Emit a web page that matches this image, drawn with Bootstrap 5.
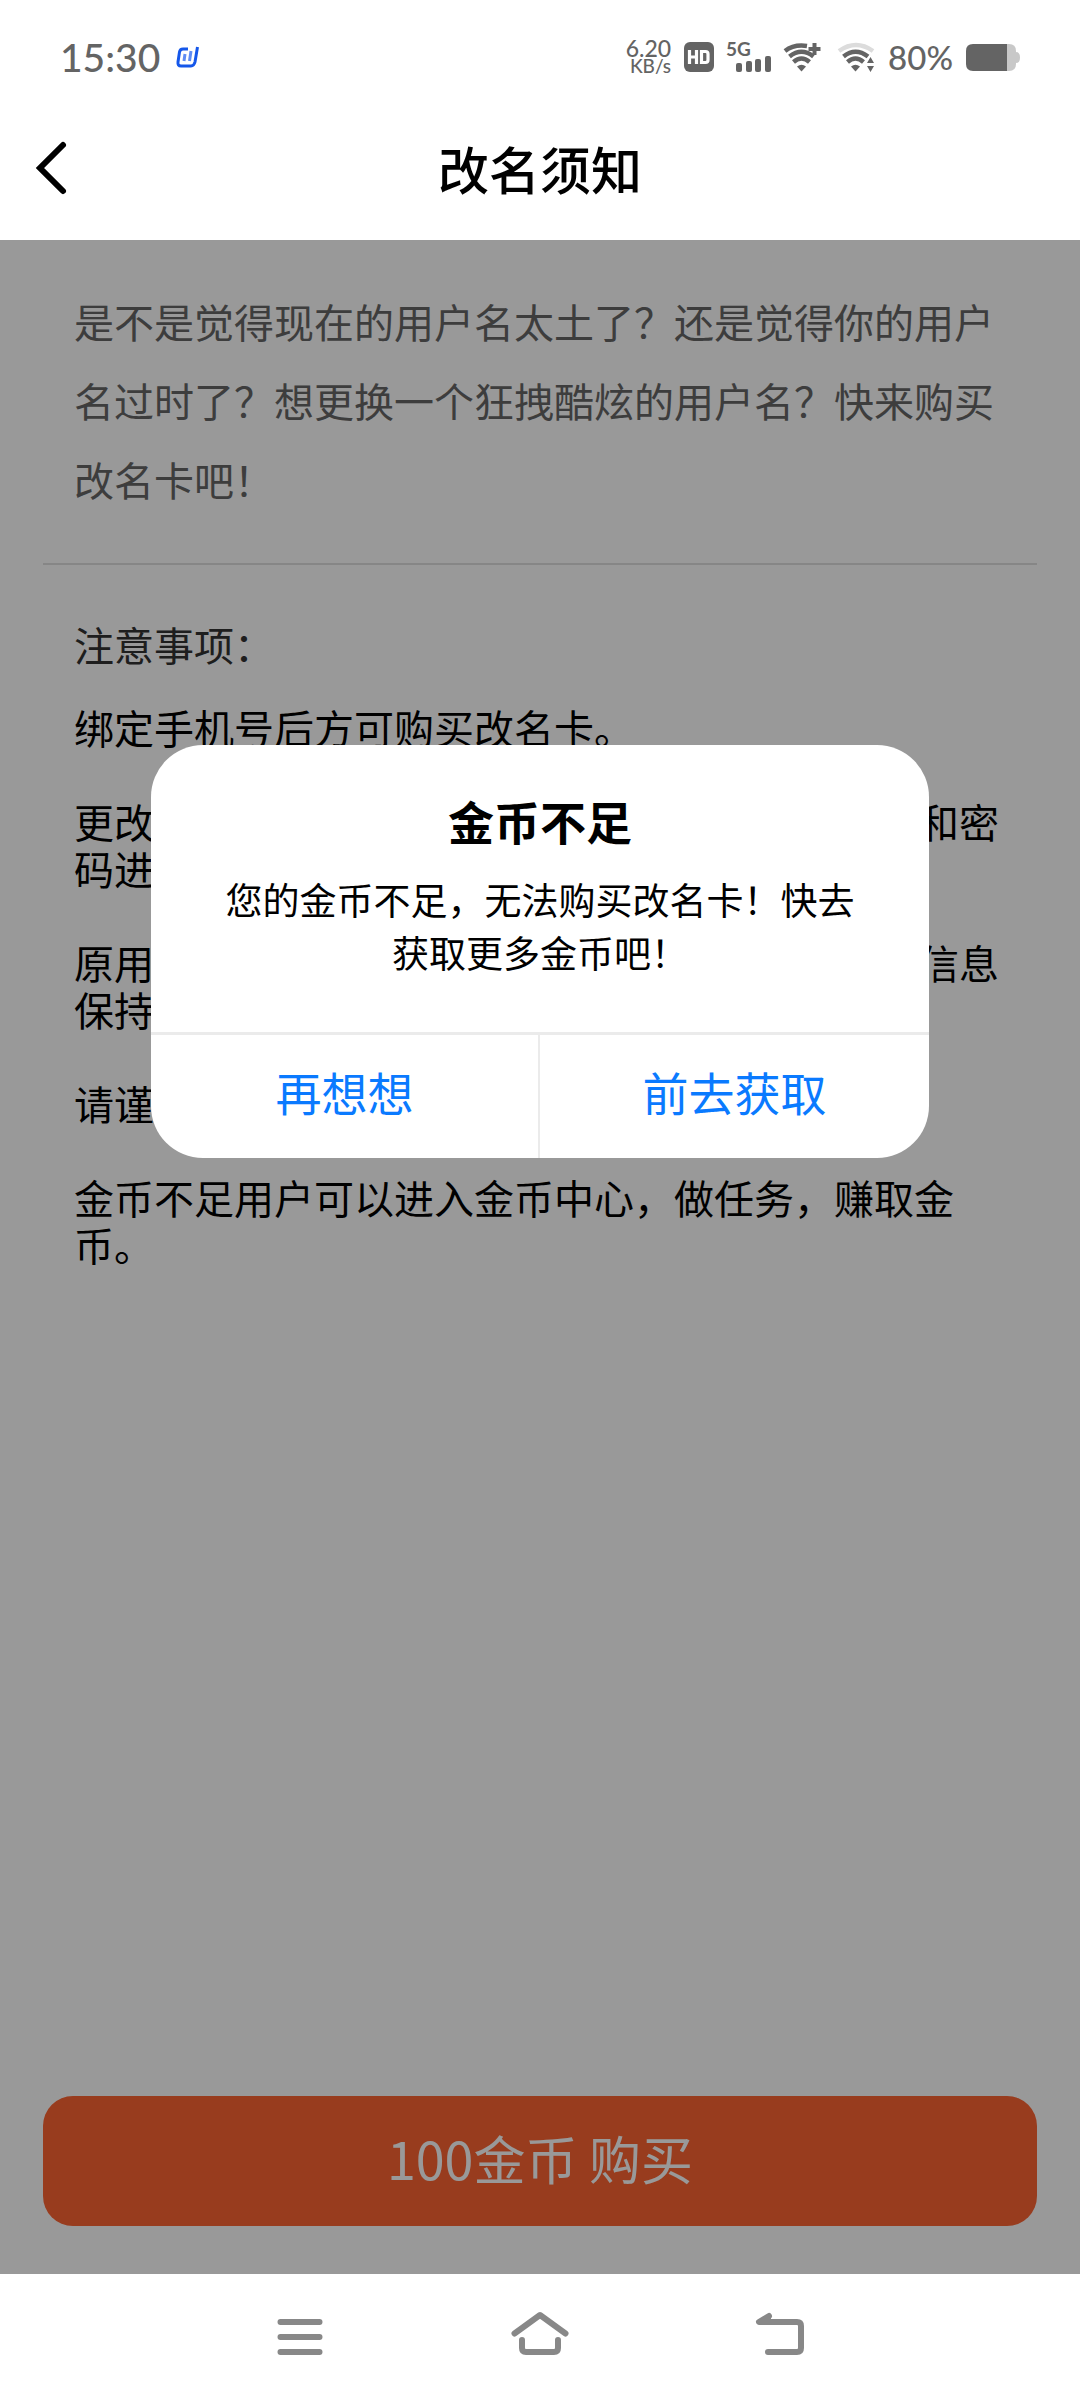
<!DOCTYPE html>
<html lang="zh-CN">
<head>
<meta charset="utf-8">
<meta name="viewport" content="width=device-width, initial-scale=1">
<title>改名须知</title>
<link href="https://cdn.jsdelivr.net/npm/bootstrap@5.3.0/dist/css/bootstrap.min.css" rel="stylesheet">
<style>
  body { font-family: "Noto Sans CJK SC", sans-serif; font-size: 40px; color: #000; background: #fff; }
  svg { display: block; flex: none; overflow: visible; }
  .status-bar { height: 96px; padding: 18px 60px 0; color: #646464; font-family: Lato, "Noto Sans CJK SC", sans-serif; font-weight: 500; }
  .status-icons { gap: 13px; }
  .clock { font-size: 39px; line-height: 48px; }
  .speed { line-height: 18px; }
  .speed-num { font-size: 23px; }
  .speed-unit { font-size: 19px; }
  .battery-text { font-size: 33px; line-height: 48px; }
  .title-bar { height: 144px; padding: 0 24px; }
  .title-bar h1 { font-size: 51px; line-height: 72px; font-weight: 500; }
  .side-slot { width: 72px; }
  .page-main { padding: 0 43px 48px; }
  .intro { padding: 42px 38px 44px 31px; line-height: 79px; color: #666; border-bottom: 2px solid #e0e0e0; }
  .notes { padding: 49px 38px 0 31px; line-height: 47px; }
  .notes h2 { font-size: 40px; line-height: 60px; margin-bottom: 30px; color: #333; font-weight: 400; }
  .notes p { margin-bottom: 47px; }
  .buy { height: 130px; border-radius: 30px; background: #fe6432; color: #fff; font-size: 52px; line-height: 72px; padding: 0 0 6px; }
  .buy:hover { background: #e95a2c; color: #fff; }
  .scrim { background: rgba(0, 0, 0, .4); padding: 505px 14% 0; }
  .dialog-box { border-radius: 52px; background: #fff; }
  .dialog-text { padding: 40px 64px 53px; font-size: 37px; line-height: 53px; }
  .dialog-text h2 { font-size: 46px; line-height: 70px; margin-bottom: 18px; font-weight: 700; }
  .dialog-actions { border-top: 3px solid #ebebeb; }
  .dialog-actions button { height: 123px; font-size: 46px; line-height: 70px; padding: 0 0 12px; color: #0a7aff; border: 0; border-radius: 0; }
  .dialog-actions .later { border-right: 2px solid #ebebeb; }
  .nav-keys { height: 126px; padding: 0 180px; }
  .nav-keys .btn { border: 0; }
</style>
<script src="https://cdn.jsdelivr.net/npm/bootstrap@5.3.0/dist/js/bootstrap.bundle.min.js"></script>
</head>
<body class="d-flex flex-column min-vh-100">
<div class="status-bar d-flex justify-content-between align-items-center">
  <div class="d-flex align-items-center gap-3">
    <span class="clock">15:30</span>
    <svg width="24" height="24" viewBox="0 0 24 24" fill="none" stroke="#1557ea" stroke-width="3"><path d="M12 4H7Q4 4 3.500 7L2 17Q1.500 21 5 21H15Q18 21 19 17L21.500 2"/><path d="M9 9L8 16M15 6L13.500 16" stroke="#5f8cf4"/></svg>
  </div>
  <div class="status-icons d-flex align-items-center">
    <div class="speed d-flex flex-column align-items-end"><span class="speed-num">6.20</span><span class="speed-unit">KB/s</span></div>
    <svg width="30" height="30" viewBox="0 0 30 30"><rect width="30" height="30" rx="6" fill="#646464"/><path d="M5.500 8V22M12.500 8V22M5.500 15H12.500" stroke="#fff" stroke-width="3.200" fill="none"/><path d="M17.500 9.500V20.500H21.500Q24 20.500 24 18V12Q24 9.500 21.500 9.500Z" stroke="#fff" stroke-width="3.200" fill="none"/></svg>
    <svg width="44" height="32" viewBox="0 0 44 32" fill="#646464"><text x="-1" y="15" font-size="19" font-weight="700">5G</text><rect x="9" y="22" width="6" height="9" rx="2"/><rect x="19" y="20" width="6" height="11" rx="2"/><rect x="28" y="18" width="6" height="13" rx="2"/><rect x="38" y="15" width="6" height="16" rx="2"/></svg>
    <svg width="37" height="30" viewBox="0 0 37 30" fill="none" stroke="#646464" stroke-width="4.500"><path d="M1 9Q10 2 23 4"/><path d="M5.500 14.500Q17.500 5 29.500 14.500"/><path d="M9.500 20Q17.500 13 25.500 20"/><path d="M13 24.500Q17.500 21 22 24.500L17.500 29.500Z" fill="#646464" stroke="none"/><path d="M30.500 1V13M24.500 7H36.500" stroke-width="4"/></svg>
    <svg class="ms-1" width="37" height="30" viewBox="0 0 37 30" fill="none" stroke="#646464" stroke-width="4.500"><path d="M1 9Q18 -3 35 9" stroke="#dcdcdc"/><path d="M5.500 14.500Q17.500 5 30 14.500"/><path d="M9.500 20Q17.500 13 25.500 20"/><path d="M13 24.500Q17.500 21 22 24.500L17.500 29.500Z" fill="#646464" stroke="none"/><path d="M29 21L32.500 15L36 21ZM29 24L32.500 30L36 24Z" fill="#646464" stroke="none"/></svg>
    <span class="battery-text">80%</span>
    <svg width="54" height="27" viewBox="0 0 54 27"><path d="M40 0H43Q50 0 50 7V8Q54 8 54 13.500T50 19V20Q50 27 43 27H40Z" fill="#c8c8c8"/><path d="M41 0H7Q0 0 0 7V20Q0 27 7 27H41Z" fill="#646464"/></svg>
  </div>
</div>
<header class="title-bar d-flex align-items-center justify-content-between">
  <button class="btn side-slot border-0 p-0" type="button" aria-label="返回"><svg width="60" height="60" viewBox="0 0 60 60" fill="none" stroke="#000" stroke-width="6" stroke-linecap="round"><path d="M39 7L16 30L39 53"/></svg></button>
  <h1 class="m-0">改名须知</h1>
  <div class="side-slot"></div>
</header>
<main class="page-main position-relative flex-grow-1 d-flex flex-column">
  <div class="intro">是不是觉得现在的用户名太土了？还是觉得你的用户名过时了？想更换一个狂拽酷炫的用户名？快来购买改名卡吧！</div>
  <section class="notes">
    <h2>注意事项：</h2>
    <p>绑定手机号后方可购买改名卡。</p>
    <p class="d-flex justify-content-between"><span>更改<br>码进</span><span>和密</span></p>
    <p class="d-flex justify-content-between"><span>原用<br>保持</span><span>信息</span></p>
    <p>请谨</p>
    <p>金币不足用户可以进入金币中心，做任务，赚取金币。</p>
  </section>
  <button class="buy btn border-0 w-100 mt-auto" type="button">100金币 购买</button>
  <div class="scrim position-absolute top-0 start-0 w-100 h-100">
    <div class="dialog-box overflow-hidden" role="dialog" aria-labelledby="dialog-title">
      <div class="dialog-text text-center"><h2 id="dialog-title">金币不足</h2>您的金币不足，无法购买改名卡！快去获取更多金币吧！</div>
      <div class="dialog-actions d-flex">
        <button class="later btn w-50" type="button">再想想</button>
        <button class="btn w-50" type="button">前去获取</button>
      </div>
    </div>
  </div>
</main>
<nav class="nav-keys d-flex align-items-center">
  <button class="btn p-0 flex-fill" type="button" aria-label="菜单"><svg class="mx-auto" width="60" height="50" viewBox="0 0 60 50" stroke="#888" stroke-width="6" stroke-linecap="round"><path d="M10.500 10H49.500M10.500 25H49.500M10.500 40H49.500"/></svg></button>
  <button class="btn p-0 flex-fill" type="button" aria-label="主页"><svg class="mx-auto" width="60" height="50" viewBox="0 0 60 50" fill="none" stroke="#888" stroke-width="6" stroke-linecap="round" stroke-linejoin="round"><path d="M4.500 21.500L30 3L55.500 21.500"/><path d="M12 28V36Q12 40 16 40H44Q48 40 48 36V28"/></svg></button>
  <button class="btn p-0 flex-fill" type="button" aria-label="后退"><svg class="mx-auto" width="60" height="50" viewBox="0 0 60 50" fill="none" stroke="#888" stroke-width="6" stroke-linecap="round" stroke-linejoin="round"><path d="M19 4L9 10H47Q51 10 51 14V36Q51 40 47 40H18"/><path d="M19 4V10H9Z" fill="#888" stroke-width="4"/></svg></button>
</nav>
</body>
</html>
